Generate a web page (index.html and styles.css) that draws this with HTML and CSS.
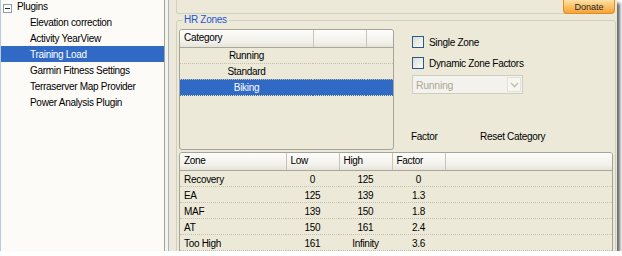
FILE: index.html
```html
<!DOCTYPE html>
<html lang="en">
<head>
    <meta charset="UTF-8">
    <title>Training Load - HR Zones</title>
    <link rel="stylesheet" href="styles.css">
</head>
<body>
    <div class="window">
        <div class="tree">
            <ul class="tree-list">
                <li class="tree-node"><span class="expander"></span>Plugins</li>
                <li class="tree-item">Elevation correction</li>
                <li class="tree-item">Activity YearView</li>
                <li class="tree-item selected">Training Load</li>
                <li class="tree-item">Garmin Fitness Settings</li>
                <li class="tree-item">Terraserver Map Provider</li>
                <li class="tree-item">Power Analysis Plugin</li>
            </ul>
        </div>
        <div class="splitter"></div>
        <div class="main">
            <div class="top-box"></div>
            <button class="donate">Donate</button>

            <div class="groupbox">
                <span class="groupbox-title">HR Zones</span>
                <div class="upper">
                    <div class="grid category-grid">
                        <table>
                            <tr>
                                <th class="col-category">Category</th>
                                <th class="col-small"></th>
                                <th class="col-last"></th>
                            </tr>
                            <tr><td class="center">Running</td><td></td><td></td></tr>
                            <tr><td class="center">Standard</td><td></td><td></td></tr>
                            <tr class="selected"><td class="center">Biking</td><td></td><td></td></tr>
                        </table>
                    </div>
                    <div class="controls">
                        <label class="check"><span class="box"></span>Single Zone</label>
                        <label class="check"><span class="box"></span>Dynamic Zone Factors</label>
                        <div class="combo">
                            <span class="combo-text">Running</span>
                            <span class="combo-btn">
                                <svg width="9" height="6" viewBox="0 0 9 6"><path d="M1 1 L4.5 4.5 L8 1" fill="none" stroke="#c3c1b4" stroke-width="1.6"/></svg>
                            </span>
                        </div>
                        <div class="labels">
                            <span class="factor-label">Factor</span>
                            <span>Reset Category</span>
                        </div>
                    </div>
                </div>

                <div class="grid zone-grid">
                    <table>
                        <tr>
                            <th class="col-zone">Zone</th>
                            <th class="col-num">Low</th>
                            <th class="col-num">High</th>
                            <th class="col-num">Factor</th>
                            <th class="col-last"></th>
                        </tr>
                        <tr><td>Recovery</td><td class="center">0</td><td class="center">125</td><td class="center">0</td><td></td></tr>
                        <tr><td>EA</td><td class="center">125</td><td class="center">139</td><td class="center">1.3</td><td></td></tr>
                        <tr><td>MAF</td><td class="center">139</td><td class="center">150</td><td class="center">1.8</td><td></td></tr>
                        <tr><td>AT</td><td class="center">150</td><td class="center">161</td><td class="center">2.4</td><td></td></tr>
                        <tr><td>Too High</td><td class="center">161</td><td class="center">Infinity</td><td class="center">3.6</td><td></td></tr>
                    </table>
                </div>
            </div>
        </div>
    </div>
</body>
</html>
```

FILE: styles.css
```css
body {
    margin: 0;
    background: #fff;
    font-family: "Liberation Sans", Arial, sans-serif;
    font-size: 10px;
    letter-spacing: -0.3px;
    color: #000;
}

.window {
    display: flex;
    width: 617px;
    height: 251px;
    overflow: hidden;
    background: #ece9d8;
    box-shadow: 3px 3px 3px rgba(0, 0, 0, 0.6);
}

/* left tree */
.tree {
    width: 165px;
    flex-shrink: 0;
    box-sizing: border-box;
    background: #fcfbf7;
    border-left: 1px solid #b9cbe3;
    border-right: 1px solid #a3a29a;
    overflow: hidden;
}

.tree-list {
    list-style: none;
    margin: -2px 0 0 0;
    padding: 0;
}

.tree-list li {
    height: 16px;
    box-sizing: border-box;
    padding-top: 2px;
    line-height: 14px;
    white-space: nowrap;
}

.tree-node {
    display: flex;
    padding-left: 2px;
}

.expander {
    position: relative;
    width: 9px;
    height: 9px;
    box-sizing: border-box;
    margin: 4px 5px 0 0;
    border: 1px solid #8a9bb3;
    background: #fff;
}

.expander::after {
    content: "";
    position: absolute;
    left: 1px;
    top: 3px;
    width: 5px;
    height: 1px;
    background: #2b2b2b;
}

.tree-item {
    padding-left: 29px;
}

.tree-item.selected {
    background: #316ac5;
    color: #fff;
}

.splitter {
    width: 11px;
    flex-shrink: 0;
    background: linear-gradient(to right, #f6f4ea 0 3px, #a8b6cc 3px 4px, #ece9d8 4px);
}

/* right side */
.main {
    position: relative;
    width: 441px;
    flex-shrink: 0;
}

.top-box {
    width: 438px;
    height: 14px;
    box-sizing: border-box;
    border: 1px solid #d0d0bf;
    border-top: none;
    border-radius: 0 0 3px 3px;
}

.donate {
    position: absolute;
    top: 0;
    left: 387px;
    width: 52px;
    height: 14px;
    padding: 1px 0 0 0;
    box-sizing: border-box;
    border: 1px solid #e08d22;
    border-top: none;
    border-radius: 0 0 4px 4px;
    background: linear-gradient(#fde2a6, #f9b650 70%, #f5a33a);
    font-family: "Liberation Sans", Arial, sans-serif;
    font-size: 9px;
    letter-spacing: 0;
    line-height: 11px;
    color: #1e2238;
}

.groupbox {
    position: relative;
    width: 440px;
    height: 240px;
    margin-top: 6px;
    padding: 8px 2px 0 2px;
    box-sizing: border-box;
    border: 1px solid #d0d0bf;
    border-radius: 3px;
}

.groupbox-title {
    position: absolute;
    top: -7px;
    left: 5px;
    padding: 0 2px;
    background: #ece9d8;
    color: #1f54d4;
    line-height: 12px;
}

.upper {
    display: flex;
}

/* grids */
.grid {
    box-sizing: border-box;
    border: 1px solid #a5a39a;
    border-radius: 3px;
    background: #ece9d8;
    overflow: hidden;
}

.category-grid {
    width: 215px;
    height: 121px;
}

.zone-grid {
    width: 434px;
    height: 110px;
    margin-top: 2px;
}

.grid table {
    width: 100%;
    table-layout: fixed;
    border-collapse: collapse;
}

.grid th {
    box-sizing: border-box;
    height: 17px;
    padding: 0 4px;
    line-height: 16px;
    text-align: left;
    font-weight: normal;
    background: linear-gradient(#fdfdfb, #f1f0ea 70%, #e6e4d9);
    border-right: 1px solid #c8c5b6;
    border-bottom: 1px solid #a9a79b;
}

.grid th.col-last {
    border-right: none;
}

.col-category {
    width: 133px;
}

.col-small {
    width: 53px;
}

.col-zone {
    width: 106px;
}

.col-num {
    width: 53px;
}

.grid td {
    box-sizing: border-box;
    height: 16px;
    padding: 1px 4px 0 4px;
    line-height: 14px;
    border-bottom: 1px dotted #c4c1b2;
    white-space: nowrap;
}

.zone-grid td {
    padding-top: 2px;
    line-height: 13px;
}

.grid td.center {
    text-align: center;
}

.grid tr.selected td {
    background: #316ac5;
    color: #fff;
    border-bottom-color: #316ac5;
}

/* controls */
.controls {
    display: flex;
    flex-direction: column;
    margin-left: 18px;
    padding-top: 5px;
}

.check {
    display: flex;
    align-items: center;
    height: 16px;
    margin-bottom: 5px;
}

.box {
    width: 12px;
    height: 12px;
    box-sizing: border-box;
    margin-right: 5px;
    border: 1px solid #2a5a8c;
    background: linear-gradient(135deg, #dcdbd3, #fbfbf9);
}

.combo {
    display: flex;
    align-items: center;
    justify-content: space-between;
    width: 111px;
    height: 19px;
    box-sizing: border-box;
    margin-top: -1px;
    border: 1px solid #cfcdc1;
    background: #f3f2ec;
}

.combo-text {
    padding-left: 3px;
    color: #aca899;
    font-size: 10.5px;
}

.combo-btn {
    display: flex;
    align-items: center;
    justify-content: center;
    width: 14px;
    height: 15px;
    margin-right: 1px;
    box-sizing: border-box;
    border: 1px solid #e4e2d8;
    background: #f7f6f1;
}

.labels {
    display: flex;
    height: 16px;
    line-height: 16px;
    margin-top: 35px;
    margin-left: -1px;
}

.factor-label {
    width: 69px;
}
```
